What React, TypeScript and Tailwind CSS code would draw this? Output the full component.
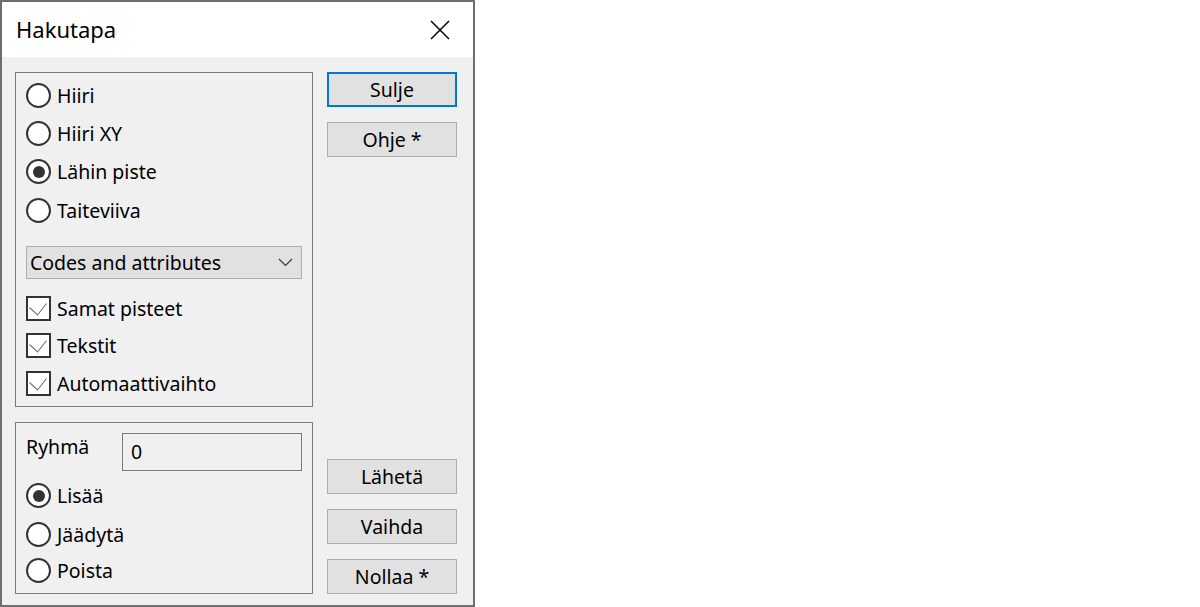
import React from 'react';

function Radio({ label, checked, className = '' }: { label: string; checked?: boolean; className?: string }) {
  return (
    <div className={`flex items-center h-[25px] ${className}`}>
      <span className="w-[25px] h-[25px] rounded-full border-2 border-[#333333] bg-white flex items-center justify-center shrink-0">
        {checked && <span className="w-[12px] h-[12px] rounded-full bg-[#333333]" />}
      </span>
      <span className="ml-[6px] text-[19.5px] leading-[25px] text-black">{label}</span>
    </div>
  );
}

function Check({ label, className = '' }: { label: string; className?: string }) {
  return (
    <div className={`flex items-center h-[25px] ${className}`}>
      <span className="w-[25px] h-[25px] border-2 border-[#333333] bg-white shrink-0">
        <svg width="21" height="21" viewBox="0 0 21 21" className="block">
          <path d="M1.5 9.5 L9.5 17 L18.5 5.5" fill="none" stroke="#707070" strokeWidth="1.1" />
        </svg>
      </span>
      <span className="ml-[6px] text-[19.5px] leading-[25px] text-black">{label}</span>
    </div>
  );
}

function Btn({ label, focused }: { label: string; focused?: boolean }) {
  return (
    <button
      className={`w-[130px] h-[35px] bg-[#e1e1e1] text-[19.5px] leading-none text-black flex items-center justify-center ${
        focused ? 'border-2 border-[#0078d7]' : 'border border-[#adadad]'
      }`}
    >
      {label}
    </button>
  );
}

export default function App() {
  return (
    <div className="w-[1200px] h-[607px] bg-white font-['Segoe_UI','Noto_Sans',sans-serif]">
      <div className="w-[475px] h-[607px] border-2 border-[#6e6e6e] flex flex-col">
        {/* title bar */}
        <div className="h-[55px] bg-white flex items-center justify-between shrink-0">
          <span className="ml-[14px] text-[22px] text-black">Hakutapa</span>
          <svg width="20" height="20" viewBox="0 0 20 20" className="mr-[23px]">
            <path d="M1 1 L19 19 M19 1 L1 19" stroke="#000" strokeWidth="1.5" />
          </svg>
        </div>

        {/* body */}
        <div className="flex-1 bg-[#f0f0f0] flex pl-[13px] pt-[15px]">
          <div className="w-[298px] flex flex-col">
            {/* group 1 */}
            <div className="h-[335px] border border-[#7a7a7a] pl-[10px] pt-[10px]">
              <Radio label="Hiiri" />
              <Radio label="Hiiri XY" className="mt-[13px]" />
              <Radio label="Lähin piste" checked className="mt-[13px]" />
              <Radio label="Taiteviiva" className="mt-[14px]" />
              <div className="mt-[23px] w-[276px] h-[33px] bg-[#e1e1e1] border border-[#adadad] flex items-center justify-between pl-[3px] pr-[8px]">
                <span className="text-[19.5px] leading-none text-black">Codes and attributes</span>
                <svg width="15" height="9" viewBox="0 0 15 9">
                  <path d="M1 1 L7.5 7.5 L14 1" fill="none" stroke="#333" strokeWidth="1.1" />
                </svg>
              </div>
              <Check label="Samat pisteet" className="mt-[17px]" />
              <Check label="Tekstit" className="mt-[12px]" />
              <Check label="Automaattivaihto" className="mt-[13px]" />
            </div>

            {/* group 2 */}
            <div className="mt-[15px] h-[172px] border border-[#7a7a7a] pl-[10px] pt-[10px]">
              <div className="flex items-start">
                <span className="w-[96px] h-[25px] leading-[25px] mt-[1px] text-[19.5px] text-black">Ryhmä</span>
                <div className="w-[180px] h-[38px] border border-[#7a7a7a] bg-[#f0f0f0] flex items-center pl-[8px]">
                  <span className="text-[19.5px] leading-none text-black">0</span>
                </div>
              </div>
              <Radio label="Lisää" checked className="mt-[12px]" />
              <Radio label="Jäädytä" className="mt-[14px]" />
              <Radio label="Poista" className="mt-[11px]" />
            </div>
          </div>

          {/* buttons */}
          <div className="ml-[14px] h-[522px] flex flex-col justify-between">
            <div className="flex flex-col gap-[15px]">
              <Btn label="Sulje" focused />
              <Btn label="Ohje *" />
            </div>
            <div className="flex flex-col gap-[15px]">
              <Btn label="Lähetä" />
              <Btn label="Vaihda" />
              <Btn label="Nollaa *" />
            </div>
          </div>
        </div>
      </div>
    </div>
  );
}
